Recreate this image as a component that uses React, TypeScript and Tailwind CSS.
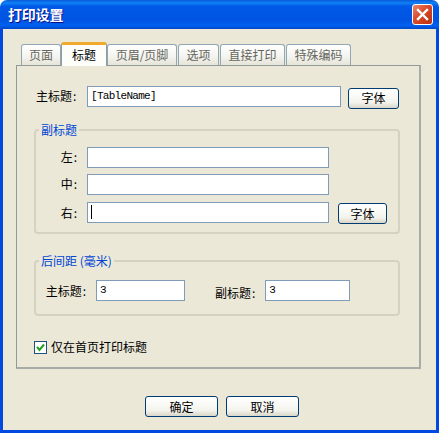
import type { ReactNode } from "react";

const tabs = ["页面", "标题", "页眉/页脚", "选项", "直接打印", "特殊编码"];
const tabWidths = ["w-[40px]", "w-[46px]", "w-[70px]", "w-[41px]", "w-[65px]", "w-[65px]"];

function TextBox({ value, width, cursor }: { value?: string; width: string; cursor?: boolean }) {
  return (
    <div className={`${width} h-[21px] shrink-0 border border-[#7f9db9] bg-white flex items-center pl-[3px] pb-px font-['Liberation_Mono',monospace] text-[11px] tracking-[-0.7px] text-black`}>
      {cursor && <span className="w-px h-[14px] bg-black" />}
      {value}
    </div>
  );
}

function XpButton({ children, width }: { children: ReactNode; width: string }) {
  return (
    <button className={`${width} h-[21px] shrink-0 rounded-[3px] border border-[#003c74] bg-[linear-gradient(180deg,#ffffff_0%,#f4f4ee_70%,#d9d6c8_100%)] text-[12px] leading-none text-black`}>
      {children}
    </button>
  );
}

function Group({ title, height, children }: { title: string; height: string; children: ReactNode }) {
  return (
    <fieldset className={`${height} ml-[17px] mr-[19px] rounded-[4px] border-2 border-[#d4d2c0] pl-[5px] -mt-[8px]`}>
      <legend className="-ml-[2px] px-[2px] text-[12px] leading-[16px] text-[#0046d5]">{title}</legend>
      {children}
    </fieldset>
  );
}

function Label({ text, width }: { text: string; width: string }) {
  return (
    <span className={`${width} shrink-0 whitespace-nowrap text-[12px] leading-none text-black text-right`}>
      {text}
      <span className="ml-px">:</span>
    </span>
  );
}

export default function App() {
  return (
    <div className="w-[439px] h-[433px] flex flex-col bg-white font-['Noto_Sans_CJK_SC','Liberation_Sans',sans-serif]">
      {/* title bar */}
      <div className="h-[29px] shrink-0 rounded-t-[7px] flex items-center justify-between pl-[8px] pr-[6px] bg-[linear-gradient(180deg,#0a5ad8_0%,#0f82f5_10%,#0058e6_22%,#0054e3_70%,#0060f0_88%,#0048c8_100%)]">
        <span className="text-[14px] font-bold tracking-[-0.2px] text-white [text-shadow:1px_1px_0_#0f1089]">打印设置</span>
        <button className="w-[21px] h-[21px] rounded-[3px] border border-white flex items-center justify-center bg-[linear-gradient(135deg,#e88a6c_0%,#d9492a_45%,#b8300f_100%)]">
          <svg width="13" height="13" viewBox="0 0 13 13">
            <path d="M2 2 L11 11 M11 2 L2 11" stroke="#fff" strokeWidth="2.4" strokeLinecap="square" fill="none" />
          </svg>
        </button>
      </div>

      {/* window body */}
      <div className="flex-1 flex flex-col border-x-[3px] border-b-[3px] border-[#0048e0] bg-[#ebe8d8]">
        <div className="flex items-end h-[36px] pl-[18px]">
          {tabs.map((t, i) =>
            i === 1 ? (
              <div key={t} className={`${tabWidths[i]} relative z-10 -ml-px -mb-px h-[24px] rounded-t-[3px] border-x border-[#919b9c] border-t-[3px] border-t-[#f0a92c] bg-[#fdfdf9] text-center text-[12px] leading-[19px] text-black`}>
                {t}
              </div>
            ) : (
              <div key={t} className={`${tabWidths[i]} h-[21px] mr-px rounded-t-[3px] border-x border-t border-[#91a7b4] bg-[linear-gradient(180deg,#ffffff_0%,#f3f3ef_60%,#e6e4d8_100%)] text-center text-[12px] leading-[20px] text-[#66665c]`}>
                {t}
              </div>
            )
          )}
        </div>

        {/* tab panel */}
        <div className="mx-[13px] w-[405px] h-[304px] flex flex-col border border-[#919b9c] border-r-2 border-b-2 border-r-[#a8aca8] border-b-[#a8aca8]">
          <div className="flex items-center mt-[18px] ml-[19px]">
            <Label width="w-[40px]" text="主标题" />
            <div className="ml-[11px]">
              <TextBox value="[TableName]" width="w-[254px]" />
            </div>
            <div className="ml-[7px]">
              <XpButton width="w-[51px]">字体</XpButton>
            </div>
          </div>

          <div className="mt-[21px]">
            <Group title="副标题" height="h-[112px]">
              <div className="flex items-center mt-[9px]">
                <Label width="w-[36px]" text="左" />
                <div className="ml-[10px]"><TextBox width="w-[242px]" /></div>
              </div>
              <div className="flex items-center mt-[6px]">
                <Label width="w-[36px]" text="中" />
                <div className="ml-[10px]"><TextBox width="w-[242px]" /></div>
              </div>
              <div className="flex items-center mt-[6px]">
                <Label width="w-[36px]" text="右" />
                <div className="ml-[10px]"><TextBox width="w-[242px]" cursor /></div>
                <div className="ml-[9px] -translate-y-px"><XpButton width="w-[49px]">字体</XpButton></div>
              </div>
            </Group>
          </div>

          <div className="mt-[27px]">
            <Group title="后间距 (毫米)" height="h-[63px]">
              <div className="flex items-center mt-[10px] pl-[4px]">
                <Label width="w-[41px]" text="主标题" />
                <div className="ml-[10px]"><TextBox value="3" width="w-[89px]" /></div>
                <div className="ml-[30px]"><Label width="w-[41px]" text="副标题" /></div>
                <div className="ml-[10px]"><TextBox value="3" width="w-[85px]" /></div>
              </div>
            </Group>
          </div>

          <div className="flex items-center mt-[25px] ml-[17px]">
            <span className="w-[13px] h-[13px] shrink-0 border border-[#1c5180] bg-white flex items-center justify-center">
              <svg width="9" height="9" viewBox="0 0 9 9">
                <path d="M1 4 L3.5 7 L8 1.5" stroke="#21a121" strokeWidth="2" fill="none" />
              </svg>
            </span>
            <span className="ml-[4px] text-[12px] leading-none text-black">仅在首页打印标题</span>
          </div>
        </div>

        {/* footer buttons */}
        <div className="flex gap-[8px] mt-[27px] pl-[142px]">
          <XpButton width="w-[73px]">确定</XpButton>
          <XpButton width="w-[73px]">取消</XpButton>
        </div>
      </div>
    </div>
  );
}
